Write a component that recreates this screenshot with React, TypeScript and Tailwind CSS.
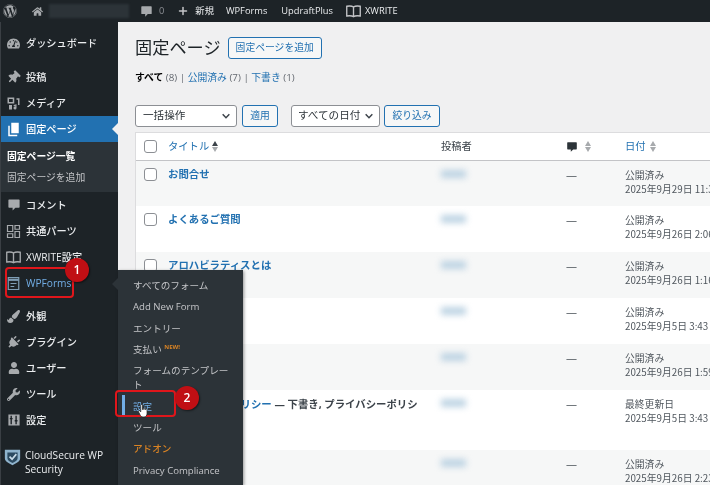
import { Plus } from "lucide-react";
import { FaWordpress, FaHome, FaPaintBrush, FaPlug, FaUser, FaWrench, FaThumbtack, FaTachometerAlt } from "react-icons/fa";

const font = "[font-family:'Open_Sans','Noto_Sans_CJK_JP',sans-serif]";

function Bubble({ className }: { className?: string }) {
  return (
    <svg viewBox="0 0 20 20" className={className} fill="currentColor">
      <path d="M3 2h14a1 1 0 0 1 1 1v10a1 1 0 0 1-1 1h-5l-4 4v-4H3a1 1 0 0 1-1-1V3a1 1 0 0 1 1-1z" />
    </svg>
  );
}

function MediaIcon() {
  return (
    <svg viewBox="0 0 20 20" className="h-[15px] w-[15px]" fill="currentColor">
      <path d="M2 2h9v8H2zM4 4v4h5V4zM4 12h4v6H4zM10 12l4-1v5a2 2 0 1 1-1.5-1.9V13l-2 .5zM14 3h4v9h-2V5h-2z" fillRule="evenodd" />
    </svg>
  );
}

function PagesIcon() {
  return (
    <svg viewBox="0 0 20 20" className="h-[15px] w-[15px]" fill="currentColor">
      <path d="M7 1h10v14H7z" />
      <path d="M3 5h2v12h10v2H3z" />
    </svg>
  );
}

function BlocksIcon() {
  return (
    <svg viewBox="0 0 20 20" className="h-[15px] w-[15px]" fill="none" stroke="currentColor" strokeWidth="1.6">
      <path d="M2 2h7v8H2zM12 2h6v5h-6zM2 13h7v5H2zM12 10h6v8h-6z" />
    </svg>
  );
}

function BookIcon() {
  return (
    <svg viewBox="0 0 22 20" className="h-[15px] w-[17px]" fill="none" stroke="currentColor" strokeWidth="1.8">
      <path d="M11 4C9 2.5 5 2.5 2 3v13c3-.5 7-.5 9 1 2-1.5 6-1.5 9-1V3c-3-.5-7-.5-9 1zM11 4v13" />
    </svg>
  );
}

function FormsIcon() {
  return (
    <svg viewBox="0 0 20 20" className="h-[15px] w-[15px] text-[#7f9db5]" fill="none" stroke="currentColor" strokeWidth="1.6">
      <path d="M3 2h14v16H3z" />
      <path d="M3 5h14" strokeWidth="3" />
      <path d="M6 10h8M6 14h5" strokeWidth="1.6" />
    </svg>
  );
}

function SettingsIcon() {
  return (
    <svg viewBox="0 0 20 20" className="h-[14px] w-[14px]" fill="currentColor">
      <path fillRule="evenodd" d="M2 2h16v16H2zM5 4v3H4v2h1v7h2V9h1V7H7V4zM12 4v6h-1v2h1v4h2v-4h1v-2h-1V4z" />
    </svg>
  );
}

function ShieldIcon() {
  return (
    <svg viewBox="0 0 20 20" className="h-[17px] w-[17px]">
      <path d="M1 1h18v10c0 4-5 6-9 8-4-2-9-4-9-8z" fill="#8fb3cc" />
      <path d="M4 4h12v7c0 2.500-3 4-6 5.500-3-1.500-6-3-6-5.500z" fill="#2c4a60" />
      <path d="M6.500 9l3 3 5-6" fill="none" stroke="#c9dbe8" strokeWidth="2" />
    </svg>
  );
}

function SortArrows({ dark }: { dark?: boolean }) {
  return (
    <span className="inline-flex flex-col gap-[1px]">
      <span className={`h-0 w-0 border-x-[3.5px] border-b-[5px] border-x-transparent ${dark ? "border-b-[#3c434a]" : "border-b-[#a7aaad]"}`} />
      <span className="h-0 w-0 border-x-[3.5px] border-t-[5px] border-x-transparent border-t-[#a7aaad]" />
    </span>
  );
}

function Chevron() {
  return (
    <svg viewBox="0 0 12 12" className="h-[10px] w-[10px] shrink-0 text-[#3c434a]" fill="none" stroke="currentColor" strokeWidth="1.8">
      <path d="M2 4l4 4 4-4" />
    </svg>
  );
}

function MenuItem({ icon, label, active, blue, tight }: { icon: React.ReactNode; label: string; active?: boolean; blue?: boolean; tight?: boolean }) {
  return (
    <div className={`relative flex ${tight ? "h-[25px]" : "h-[26px]"} items-center ${active ? "bg-[#2271b1] text-white" : "text-[#eaecee]"}`}>
      <span className={`flex w-[25px] shrink-0 justify-center ${active ? "text-white" : "text-[#a7aaad]"}`}>{icon}</span>
      <span className={`whitespace-nowrap pt-[1px] text-[10.2px] font-medium ${blue ? "text-[#72aee6]" : ""}`}>{label}</span>
      {active && (
        <span className="absolute right-0 top-[7px] h-0 w-0 border-y-[6px] border-r-[6px] border-y-transparent border-r-[#f0f0f1]" />
      )}
    </div>
  );
}

function Sidebar() {
  return (
    <aside className="w-[118px] shrink-0 border-l border-l-[#3a3f44] bg-[#1d2327] pt-[8px]">
      <MenuItem icon={<FaTachometerAlt className="h-[13px] w-[13px]" />} label="ダッシュボード" />
      <div className="h-[8px]" />
      <MenuItem icon={<FaThumbtack className="h-[13px] w-[13px] rotate-45" />} label="投稿" />
      <MenuItem icon={<MediaIcon />} label="メディア" />
      <MenuItem icon={<PagesIcon />} label="固定ページ" active />
      <div className="h-[50px] bg-[#2c3338] pl-[6px] pt-[4px] text-[9.8px] leading-[21px]">
        <div className="font-bold text-white">固定ページ一覧</div>
        <div className="text-[#c3c4c7]">固定ページを追加</div>
      </div>
      <MenuItem icon={<Bubble className="h-[14px] w-[14px]" />} label="コメント" />
      <MenuItem icon={<BlocksIcon />} label="共通パーツ" />
      <MenuItem icon={<BookIcon />} label="XWRITE設定" />
      <MenuItem icon={<FormsIcon />} label="WPForms" blue />
      <div className="h-[8px]" />
      <MenuItem icon={<FaPaintBrush className="h-[13px] w-[13px]" />} label="外観" tight />
      <MenuItem icon={<FaPlug className="h-[13px] w-[13px] rotate-45" />} label="プラグイン" />
      <MenuItem icon={<FaUser className="h-[12px] w-[12px]" />} label="ユーザー" />
      <MenuItem icon={<FaWrench className="h-[13px] w-[13px]" />} label="ツール" />
      <MenuItem icon={<SettingsIcon />} label="設定" />
      <div className="mt-[9px] flex text-[#eaecee]">
        <span className="flex w-[22px] shrink-0 justify-center pt-[7px]">
          <ShieldIcon />
        </span>
        <span className="ml-[2px] w-[90px] pt-[6px] text-[10.2px] font-medium leading-[14px]">CloudSecure WP Security</span>
      </div>
    </aside>
  );
}

const rows = [
  { title: "お問合せ", status: "公開済み", date: "2025年9月29日 11:37", h: "h-[45px]" },
  { title: "よくあるご質問", status: "公開済み", date: "2025年9月26日 2:06", h: "h-[46px]" },
  { title: "アロハビラティスとは", status: "公開済み", date: "2025年9月26日 1:16", h: "h-[46px]" },
  { title: "", status: "公開済み", date: "2025年9月5日 3:43", h: "h-[46px]" },
  { title: "", status: "公開済み", date: "2025年9月26日 1:59", h: "h-[46px]" },
  { title: "プライバシーポリシー", draft: true, status: "最終更新日", date: "2025年9月5日 3:43", h: "h-[60px]" },
  { title: "", status: "公開済み", date: "2025年9月26日 2:23", h: "h-[46px]" },
];

const cols = "grid grid-cols-[32px_273px_125px_59px_160px]";

function Checkbox() {
  return <span className="block h-[13px] w-[13px] rounded-[3px] border border-[#8c8f94] bg-white" />;
}

function PagesTable() {
  return (
    <div className="mt-[5px] w-[650px] border border-[#dcdcde] bg-white">
      <div className={`${cols} h-[28px] items-center border-b border-b-[#c3c4c7] text-[10.3px]`}>
        <span className="pl-[8px]">
          <Checkbox />
        </span>
        <span className="flex items-center gap-[3px] text-[#2271b1]">
          タイトル <SortArrows dark />
        </span>
        <span className="text-[#3c434a]">投稿者</span>
        <span className="flex items-center gap-[7px]">
          <Bubble className="h-[12px] w-[12px] text-[#2c3338]" />
          <SortArrows />
        </span>
        <span className="flex items-center gap-[4px] text-[#2271b1]">
          日付 <SortArrows />
        </span>
      </div>
      {rows.map((r, i) => (
        <div key={i} className={`${cols} ${r.h} ${i % 2 === 0 ? "bg-[#f6f7f7]" : "bg-white"} overflow-hidden`}>
          <span className="pl-[8px] pt-[7px]">
            <Checkbox />
          </span>
          <span className={`pr-[16px] ${r.draft ? "pt-[7px]" : "pt-[6px]"} text-[10.4px] font-bold leading-[15px] text-[#2271b1]`}>
            {r.title}
            {r.draft && <span className="text-[#3c434a]"> — 下書き, プライバシーポリシー</span>}
          </span>
          <span className="pt-[9px]">
            <span className="block h-[8px] w-[25px] bg-[#bdd3e3] blur-[3px]" />
          </span>
          <span className="pt-[6px] text-[11px] leading-[15px] text-[#50575e]">—</span>
          <span className="whitespace-nowrap pt-[7px] text-[9.8px] leading-[14px] text-[#50575e] [font-family:'Noto_Sans_CJK_JP',sans-serif]">
            {r.status}
            <br />
            {r.date}
          </span>
        </div>
      ))}
    </div>
  );
}

function Flyout() {
  const items = ["すべてのフォーム", "Add New Form", "エントリー"];
  return (
    <div className="absolute left-[118px] top-[270px] h-[215px] w-[125px] bg-[#2c3338] pl-[15px] pt-[5px] text-[9.6px] text-[#c3c4c7] shadow-[1px_1px_3px_rgba(0,0,0,0.4)]">
      <span className="absolute -left-[6px] top-[8px] h-0 w-0 border-y-[6px] border-r-[6px] border-y-transparent border-r-[#2c3338]" />
      {items.map((t) => (
        <div key={t} className="h-[21.3px] leading-[21px]">
          {t}
        </div>
      ))}
      <div className="h-[21.3px] leading-[21px]">
        支払い <span className="relative -top-[4px] text-[6px] font-bold text-[#d98324]">NEW!</span>
      </div>
      <div className="h-[29px] w-[100px] pt-[4px] leading-[14px]">フォームのテンプレート</div>
      <div className="relative mt-[7px] h-[21px] leading-[21px] text-[#72aee6]">
        設定
        <span className="absolute -left-[11px] -top-[1px] h-[20px] w-[3px] bg-[#72aee6]" />
      </div>
      <div className="h-[21.3px] leading-[21px]">ツール</div>
      <div className="h-[21.3px] font-medium leading-[21px] text-[#d98324]">アドオン</div>
      <div className="h-[21.3px] leading-[21px]">Privacy Compliance</div>
    </div>
  );
}

function Callouts() {
  return (
    <>
      <div className="absolute left-[5px] top-[267px] h-[31px] w-[69px] rounded-[4px] border-2 border-[#e0161b]" />
      <div className="absolute left-[65px] top-[258px] flex h-[24px] w-[24px] items-center justify-center rounded-full bg-[#c00f14] text-[12px] font-semibold text-white shadow-[1px_1px_2px_rgba(0,0,0,0.5)]">
        1
      </div>
      <div className="absolute left-[115px] top-[390px] h-[27px] w-[61px] rounded-[4px] border-2 border-[#e0161b]" />
      <div className="absolute left-[175px] top-[386px] flex h-[24px] w-[24px] items-center justify-center rounded-full bg-[#c00f14] text-[12px] font-semibold text-white shadow-[1px_1px_2px_rgba(0,0,0,0.5)]">
        2
      </div>
      <svg viewBox="0 0 16 18" className="absolute left-[137px] top-[404px] h-[14px] w-[12px]">
        <path
          d="M5 1.500a1.200 1.200 0 0 1 2.400 0V7h1V6a1 1 0 0 1 2 0v1h1a1 1 0 0 1 2 .3V12c0 3-1.500 5-4 5H8c-2 0-3-1-4-3L2 10c-.5-1 1-2 2-1l1 1z"
          fill="#fff"
          stroke="#222"
          strokeWidth="1"
        />
      </svg>
    </>
  );
}

export default function App() {
  return (
    <div className="h-[485px] w-[710px] overflow-hidden">
      <div className={`relative h-[485px] w-[710px] overflow-hidden bg-[#f0f0f1] blur-[0.4px] ${font}`}>
        <header className="flex h-[22px] items-center whitespace-nowrap bg-[#1d2327] text-[9.3px] text-[#eaecee]">
          <FaWordpress className="ml-[3px] h-[14px] w-[14px] shrink-0 text-[#a7aaad]" />
          <FaHome className="ml-[15px] h-[11px] w-[11px] shrink-0 text-[#a7aaad]" />
          <span className="ml-[6px] h-[14px] w-[80px] shrink-0 bg-[#2c3338] blur-[1px]" />
          <Bubble className="ml-[11px] h-[13px] w-[13px] shrink-0 text-[#a7aaad]" />
          <span className="ml-[6px] text-[#8c8f94]">0</span>
          <Plus className="ml-[13px] h-[12px] w-[12px] shrink-0 text-[#c3c4c7]" strokeWidth={3} />
          <span className="ml-[6px]">新規</span>
          <span className="ml-[12px]">WPForms</span>
          <span className="ml-[14px]">UpdraftPlus</span>
          <span className="ml-[12px] text-[#c3c4c7]">
            <BookIcon />
          </span>
          <span className="ml-[3px]">XWRITE</span>
        </header>
        <div className="flex">
          <Sidebar />
          <main className="pl-[17px] pt-[13px]">
            <div className="flex items-center">
              <h1 className="text-[17.2px] leading-[26px] text-[#1d2327]">固定ページ</h1>
              <button className="ml-[7px] h-[22px] rounded-[3px] border border-[#2271b1] bg-[#f6f7f7] px-[7px] text-[9.8px] text-[#2271b1]">
                固定ページを追加
              </button>
            </div>
            <div className="mt-[9px] text-[9.8px] leading-[15px] text-[#646970]">
              <b className="font-bold text-black">すべて</b> (8) | <span className="text-[#2271b1]">公開済み</span> (7) |{" "}
              <span className="text-[#2271b1]">下書き</span> (1)
            </div>
            <div className="mt-[20px] flex items-center">
              <div className="flex h-[22px] w-[102px] items-center justify-between rounded-[3px] border border-[#8c8f94] bg-white pl-[7px] pr-[5px] text-[10.6px] text-[#2c3338]">
                一括操作
                <Chevron />
              </div>
              <button className="ml-[5px] h-[22px] w-[36px] rounded-[3px] border border-[#2271b1] bg-[#f6f7f7] text-[9.8px] text-[#2271b1]">
                適用
              </button>
              <div className="ml-[13px] flex h-[22px] w-[89px] items-center justify-between whitespace-nowrap rounded-[3px] border border-[#8c8f94] bg-white pl-[6px] pr-[5px] text-[10.6px] text-[#2c3338]">
                すべての日付
                <Chevron />
              </div>
              <button className="ml-[4px] h-[22px] w-[56px] rounded-[3px] border border-[#2271b1] bg-[#f6f7f7] text-[9.8px] text-[#2271b1]">
                絞り込み
              </button>
            </div>
            <PagesTable />
          </main>
        </div>
        <Flyout />
        <Callouts />
      </div>
    </div>
  );
}
